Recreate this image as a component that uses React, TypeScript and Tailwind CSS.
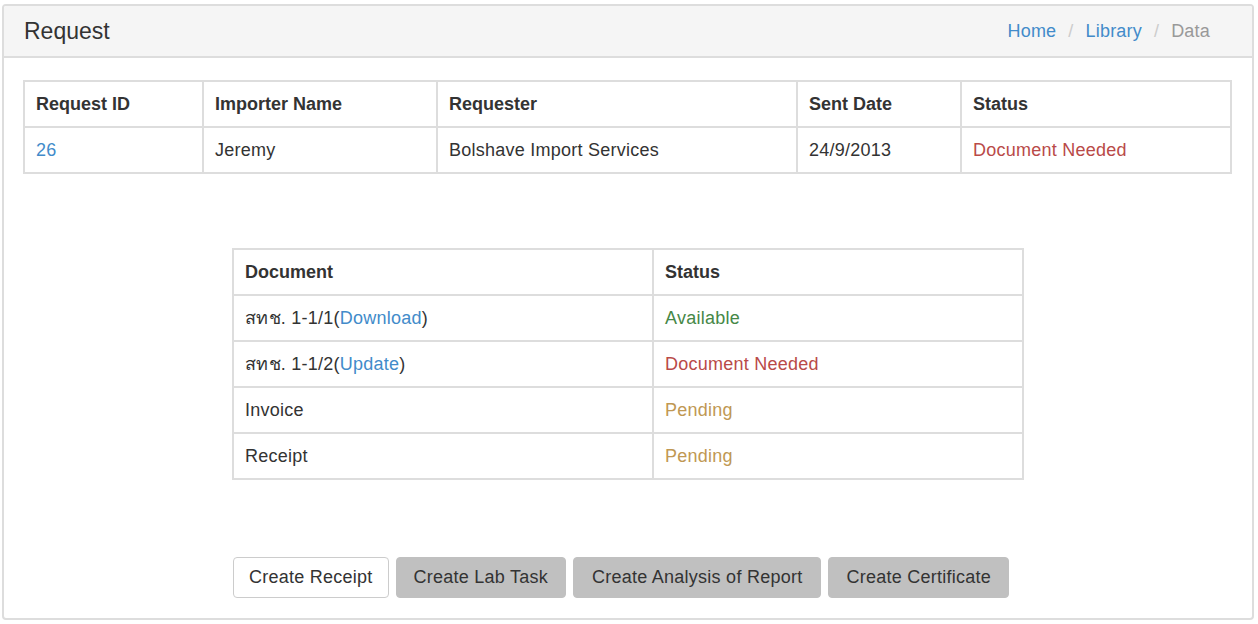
import React from "react";

const font = { fontFamily: '"Liberation Sans", Arial, Helvetica, sans-serif' };

const th = "border-2 border-[#dddddd] px-[11px] py-[10px] text-left font-bold leading-[24px] text-[#333333] text-[18px]";
const td = "border-2 border-[#dddddd] px-[11px] py-[10px] text-left font-normal leading-[24px] text-[#333333] text-[18px] tracking-[0.25px]";
const btn = "h-[41px] rounded-[4px] border text-[18px] tracking-[0.25px] text-[#333333]";

export default function App() {
  return (
    <div className="w-[1258px] h-[624px] bg-white pt-[4px] pl-[2px] pr-[4px] text-[18px] text-[#333333]" style={font}>
      <div className="h-[616px] border-2 border-[#dddddd] rounded-[4px] overflow-hidden flex flex-col">
        <div className="h-[52px] bg-[#f5f5f5] border-b-2 border-[#dddddd] flex items-center justify-between pl-[20px] pr-[42px]">
          <div className="text-[23px] leading-[28px] text-[#333333]">Request</div>
          <div className="flex items-center text-[18px] leading-[24px] tracking-[0.2px]">
            <a className="text-[#428bca]">Home</a>
            <span className="text-[#cccccc] px-[12px]">/</span>
            <a className="text-[#428bca]">Library</a>
            <span className="text-[#cccccc] px-[12px]">/</span>
            <span className="text-[#999999]">Data</span>
          </div>
        </div>
        <div className="pl-[19px] pr-[20px] pt-[22px]">
          <table className="w-full table-fixed border-collapse">
            <colgroup>
              <col className="w-[179px]" />
              <col className="w-[234px]" />
              <col className="w-[360px]" />
              <col className="w-[164px]" />
              <col />
            </colgroup>
            <thead>
              <tr>
                <th className={th}>Request ID</th>
                <th className={th}>Importer Name</th>
                <th className={th}>Requester</th>
                <th className={th}>Sent Date</th>
                <th className={th}>Status</th>
              </tr>
            </thead>
            <tbody>
              <tr>
                <td className={td}><a className="text-[#428bca]">26</a></td>
                <td className={td}>Jeremy</td>
                <td className={td}>Bolshave Import Services</td>
                <td className={td}>24/9/2013</td>
                <td className={td}><span className="text-[#b94a48]">Document Needed</span></td>
              </tr>
            </tbody>
          </table>

          <div className="ml-[209px] w-[792px] mt-[74px]">
            <table className="w-full table-fixed border-collapse">
              <colgroup>
                <col className="w-[420px]" />
                <col />
              </colgroup>
              <thead>
                <tr>
                  <th className={th}>Document</th>
                  <th className={th}>Status</th>
                </tr>
              </thead>
              <tbody>
                <tr>
                  <td className={td}>สทช. 1-1/1(<a className="text-[#428bca]">Download</a>)</td>
                  <td className={td}><span className="text-[#468847]">Available</span></td>
                </tr>
                <tr>
                  <td className={td}>สทช. 1-1/2(<a className="text-[#428bca]">Update</a>)</td>
                  <td className={td}><span className="text-[#b94a48]">Document Needed</span></td>
                </tr>
                <tr>
                  <td className={td}>Invoice</td>
                  <td className={td}><span className="text-[#c09853]">Pending</span></td>
                </tr>
                <tr>
                  <td className={td}>Receipt</td>
                  <td className={td}><span className="text-[#c09853]">Pending</span></td>
                </tr>
              </tbody>
            </table>

            <div className="mt-[77px] pl-[1px] flex gap-[7px]">
              <button className={btn + " px-[15px] border-[#cccccc] bg-white"}>Create Receipt</button>
              <button className={btn + " px-[17px] border-[#c0c0c0] bg-[#c0c0c0]"}>Create Lab Task</button>
              <button className={btn + " px-[18px] border-[#c0c0c0] bg-[#c0c0c0]"}>Create Analysis of Report</button>
              <button className={btn + " px-[17px] border-[#c0c0c0] bg-[#c0c0c0]"}>Create Certificate</button>
            </div>
          </div>
        </div>
      </div>
    </div>
  );
}
